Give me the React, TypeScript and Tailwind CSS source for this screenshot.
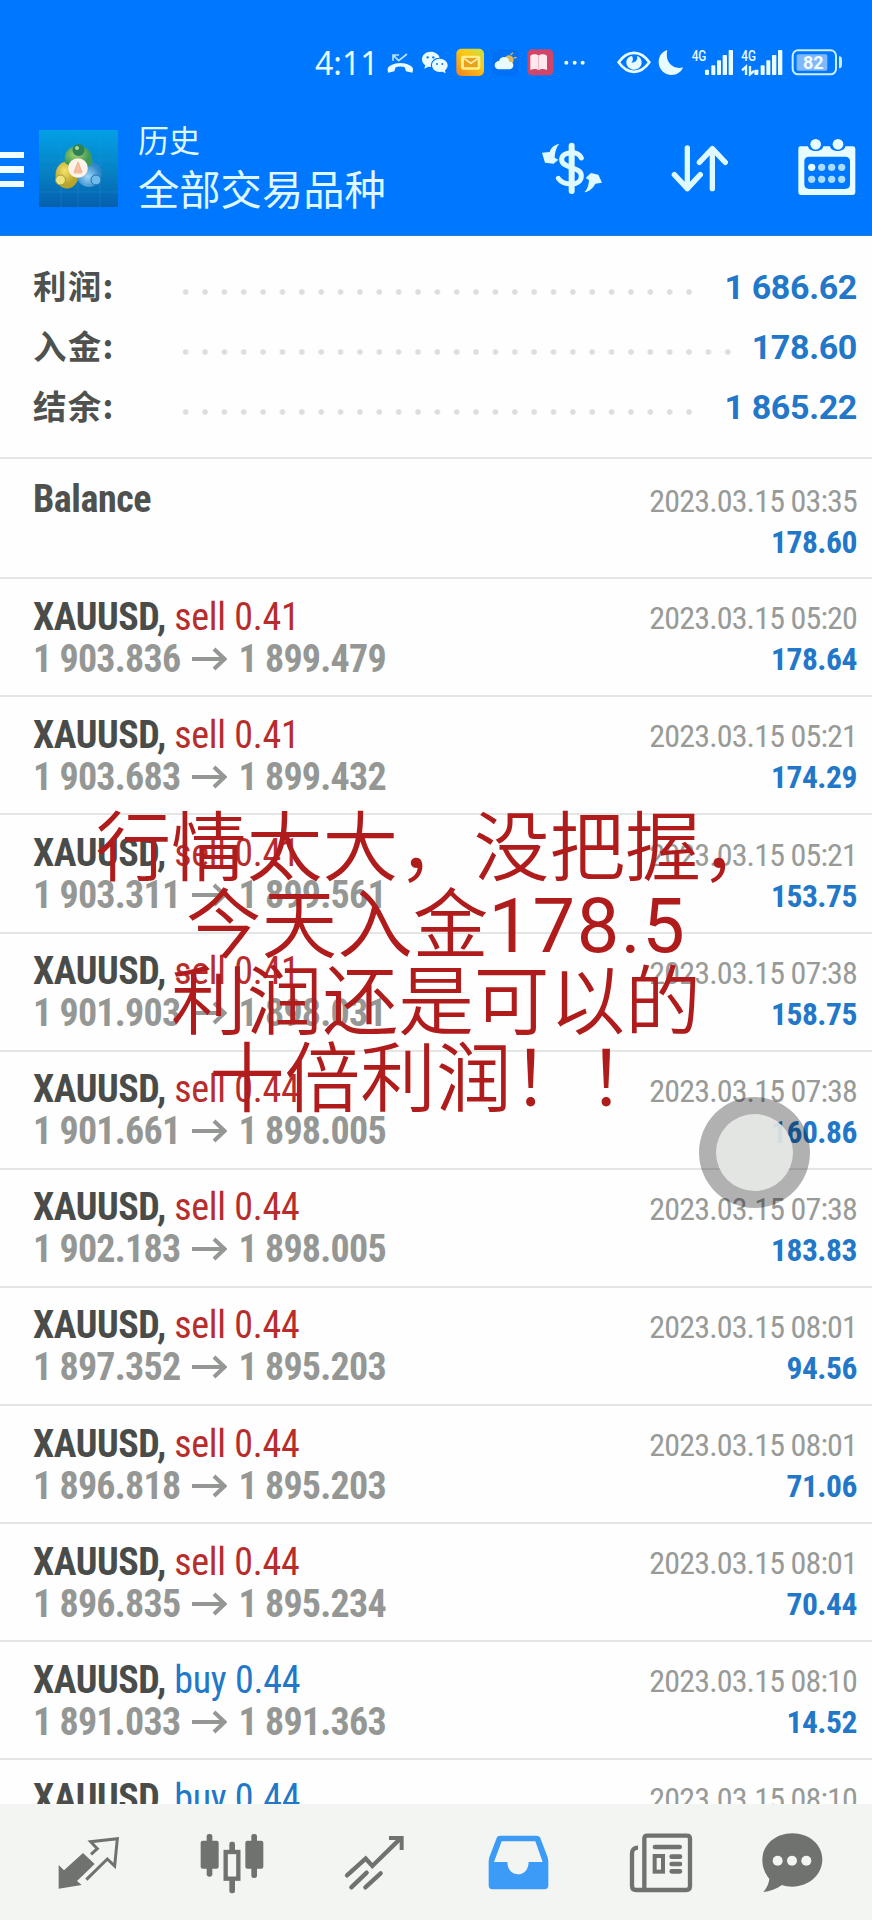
import React from "react";

const summary = [
	{ label: "利润:", value: "1 686.62", dots: "w-[523px]" },
	{ label: "入金:", value: "178.60", dots: "w-[562px]" },
	{ label: "结余:", value: "1 865.22", dots: "w-[523px]" },
];

const deals = [
	{ side: "sell", lot: "0.41", from: "1 903.836", to: "1 899.479", time: "2023.03.15 05:20", profit: "178.64" },
	{ side: "sell", lot: "0.41", from: "1 903.683", to: "1 899.432", time: "2023.03.15 05:21", profit: "174.29" },
	{ side: "sell", lot: "0.41", from: "1 903.311", to: "1 899.561", time: "2023.03.15 05:21", profit: "153.75" },
	{ side: "sell", lot: "0.41", from: "1 901.903", to: "1 898.031", time: "2023.03.15 07:38", profit: "158.75" },
	{ side: "sell", lot: "0.44", from: "1 901.661", to: "1 898.005", time: "2023.03.15 07:38", profit: "160.86" },
	{ side: "sell", lot: "0.44", from: "1 902.183", to: "1 898.005", time: "2023.03.15 07:38", profit: "183.83" },
	{ side: "sell", lot: "0.44", from: "1 897.352", to: "1 895.203", time: "2023.03.15 08:01", profit: "94.56" },
	{ side: "sell", lot: "0.44", from: "1 896.818", to: "1 895.203", time: "2023.03.15 08:01", profit: "71.06" },
	{ side: "sell", lot: "0.44", from: "1 896.835", to: "1 895.234", time: "2023.03.15 08:01", profit: "70.44" },
	{ side: "buy", lot: "0.44", from: "1 891.033", to: "1 891.363", time: "2023.03.15 08:10", profit: "14.52" },
];

const SignalBars = () => (
	<g fill="#e8fbff">
		<rect x="375" y="119" width="12" height="16" rx="2" />
		<rect x="394" y="106" width="12" height="29" rx="2" />
		<rect x="411" y="91" width="12" height="44" rx="2" />
		<rect x="428" y="75" width="13" height="60" rx="2" />
		<rect x="446" y="60" width="13" height="75" rx="2" />
	</g>
);

const StatusBar = () => (
	<div className="flex h-[100px] items-start pl-[315px] pt-[47px]">
		<span className="w-[71px] font-['Noto_Sans'] text-[32px] leading-[31px] text-[#e8fbff]">
			4:11
		</span>
		<svg viewBox="255 51 84 93" width="28" height="31">
			<path d="M262 128c-4-10-3-16 8-22 18-9 38-9 56 0 11 6 12 12 8 22l-19-4-4-12c-9-3-18-3-27 0l-4 12z" fill="#e8fbff" />
			<path d="M276 92V75h18M277 76l16 16 25-20" fill="none" stroke="#b9e2ff" strokeWidth="5" />
		</svg>
		<svg viewBox="360 51 84 93" width="28" height="31" className="ml-[7px]">
			<path d="M389 65c-15 0-26 10-26 23 0 8 4 14 10 18l-3 10 12-6 8 1c-2-18 10-28 26-28-3-11-14-18-27-18z" fill="#e8fbff" />
			<path d="M416 86c-13 0-23 9-23 20s10 20 23 20l8-1 10 5-2-9c5-4 8-9 8-15 0-11-11-20-24-20z" fill="#e8fbff" />
			<g fill="#0a7bff">
				<circle cx="380" cy="82" r="3.5" />
				<circle cx="397" cy="82" r="3.5" />
				<circle cx="408" cy="102" r="3" />
				<circle cx="424" cy="102" r="3" />
			</g>
		</svg>
		<svg viewBox="465 51 87 93" width="29" height="31" className="ml-[7px]">
			<defs>
				<linearGradient id="mail" x1="1" y1="0" x2="0.2" y2="1">
					<stop offset="0" stopColor="#c5e04a" />
					<stop offset="0.45" stopColor="#fbc815" />
					<stop offset="1" stopColor="#f58a1f" />
				</linearGradient>
			</defs>
			<rect x="466" y="56" width="83" height="82" rx="15" fill="url(#mail)" />
			<rect x="480" y="77" width="58" height="42" rx="7" fill="#fff08a" />
			<rect x="489" y="84" width="41" height="28" rx="2" fill="#e8a21c" />
			<path d="M490 86l20 14 20-14" fill="none" stroke="#fff3b8" strokeWidth="5" />
		</svg>
		<svg viewBox="573 51 81 93" width="27" height="31" className="ml-[7px]">
			<rect x="574" y="57" width="78" height="80" rx="14" fill="#0070f5" />
			<circle cx="624" cy="90" r="14" fill="#e0b95c" />
			<path d="M629 74l7-6M638 84l9-2" stroke="#e0b95c" strokeWidth="4" />
			<path d="M594 118c-9 0-13-6-13-12 0-8 6-13 13-13 2-8 8-12 15-12 9 0 15 6 16 14 8 0 12 5 12 11 0 8-6 12-12 12z" fill="#e8fbff" />
		</svg>
		<svg viewBox="678 51 87 93" width="29" height="31" className="ml-[7px]">
			<rect x="682" y="58" width="78" height="78" rx="14" fill="#d0466a" />
			<path d="M691 77c9-6 19-5 25 0 6-5 16-6 25 0v43c-9-4-19-4-25 1-6-5-16-5-25-1z" fill="#ffe9ee" />
			<path d="M716 77v43" stroke="#e6b4c2" strokeWidth="3" />
		</svg>
		<svg viewBox="789 51 72 93" width="24" height="31" className="ml-[8px]">
			<g fill="#e8fbff">
				<circle cx="799" cy="98" r="6" />
				<circle cx="824" cy="98" r="6" />
				<circle cx="848" cy="98" r="6" />
			</g>
		</svg>
		<svg viewBox="111 51 102 93" width="34" height="31" className="ml-[30px]">
			<path d="M116 97c26-38 66-38 92 0-26 38-66 38-92 0z" fill="none" stroke="#e8fbff" strokeWidth="8" />
			<path d="M156 78c-11 2-17 10-17 19 0 12 10 22 23 22s23-9 23-22c0-9-6-17-14-19 3 12-4 20-17 20 6-5 6-13 2-20z" fill="#e8fbff" />
		</svg>
		<svg viewBox="234 51 78 93" width="26" height="31" className="ml-[7px]">
			<path d="M262 60c-16 4-26 19-26 36 0 22 17 39 39 39 16 0 29-9 34-23-25 8-56-12-47-52z" fill="#e8fbff" />
		</svg>
		<svg viewBox="333 51 129 93" width="43" height="31" className="ml-[7px]">
			<SignalBars />
			<text x="335" y="94" fontSize="46" fontWeight="500" textLength="44" lengthAdjust="spacingAndGlyphs" fill="#e8fbff" fontFamily="Roboto, sans-serif">4G</text>
		</svg>
		<svg viewBox="333 51 129 93" width="43" height="31" className="ml-[7px]">
			<g transform="translate(-2 0)">
				<SignalBars />
				<text x="336" y="94" fontSize="46" fontWeight="500" textLength="44" lengthAdjust="spacingAndGlyphs" fill="#e8fbff" fontFamily="Roboto, sans-serif">4G</text>
				<path d="M350 135v-25l-12 11M362 108v25l12-10" fill="none" stroke="#e8fbff" strokeWidth="7" />
			</g>
		</svg>
		<svg viewBox="633 51 156 93" width="52" height="31" className="ml-[7px]">
			<rect x="638" y="61" width="130" height="72" rx="16" fill="none" stroke="#cdeeff" strokeWidth="6" />
			<rect x="650" y="73" width="92" height="49" rx="5" fill="#7fb9fb" />
			<path d="M777 79c9 0 9 6 9 18s0 18-9 18z" fill="#cdeeff" />
			<text x="700" y="116" fontSize="54" fontWeight="700" textAnchor="middle" fill="#f4fdff" fontFamily="Roboto, sans-serif">82</text>
		</svg>
	</div>
);

const AppLogo = () => (
	<svg viewBox="0 0 79 77" width="79" height="77" className="ml-[15px]">
		<defs>
			<linearGradient id="sky" x1="0" y1="0" x2="0" y2="1">
				<stop offset="0" stopColor="#03a0e6" />
				<stop offset="0.55" stopColor="#0681c4" />
				<stop offset="1" stopColor="#055fae" />
			</linearGradient>
			<radialGradient id="green" cx="0.4" cy="0.4">
				<stop offset="0" stopColor="#a5d272" />
				<stop offset="1" stopColor="#3f9a58" />
			</radialGradient>
			<radialGradient id="gold" cx="0.4" cy="0.35">
				<stop offset="0" stopColor="#f6e36a" />
				<stop offset="1" stopColor="#b7a42c" />
			</radialGradient>
			<radialGradient id="azure" cx="0.45" cy="0.6">
				<stop offset="0" stopColor="#9fd6f7" />
				<stop offset="1" stopColor="#2f88c8" />
			</radialGradient>
		</defs>
		<rect width="79" height="77" fill="url(#sky)" />
		<path d="M0 30h79M0 62h79M22 0v77M39 0v77M61 0v77" stroke="#2b9ad8" strokeWidth="0.6" opacity="0.5" />
		<ellipse cx="28" cy="45" rx="11.500" ry="13.500" fill="url(#gold)" />
		<ellipse cx="50" cy="44" rx="12.500" ry="13" fill="url(#azure)" />
		<path d="M26 33c-2-11 4-17 13-17s16 6 14 19c-5 3-22 3-27-2z" fill="url(#green)" />
		<circle cx="39.500" cy="20" r="6" fill="#2e8055" />
		<circle cx="38" cy="18" r="2" fill="#a5dd9a" />
		<circle cx="21.500" cy="50" r="5" fill="#eee47e" stroke="#a59a2a" />
		<circle cx="57" cy="50" r="5" fill="#6dbcec" stroke="#1f6fae" />
		<circle cx="39" cy="38" r="9.800" fill="#fdf3e8" />
		<path d="M39 32l-4 10h8zM35 43h8" fill="#f3bf9c" stroke="#f0b391" strokeWidth="1" />
	</svg>
);

const Header = () => (
	<header className="h-[236px] shrink-0 border-b border-[#2b7fd4] bg-[#0077ff]">
		<StatusBar />
		<div className="flex h-[135px] items-start">
			<div className="flex w-6 flex-col gap-2 pt-[52px]">
				<div className="h-[6.400px] bg-[#effdff]" />
				<div className="h-[6.400px] bg-[#effdff]" />
				<div className="h-[6.400px] bg-[#effdff]" />
			</div>
			<div className="pt-[30px]">
				<AppLogo />
			</div>
			<div className="ml-[20px] flex-1 pt-[17px] font-['Noto_Sans_CJK_SC'] text-[#dff8ff]">
				<div className="text-[31px] leading-[44px]">历史</div>
				<div className="text-[41.300px] leading-[52px]">全部交易品种</div>
			</div>
			<svg viewBox="60 90 192 168" width="64" height="56" className="mt-[40px]">
				<g fill="none" stroke="#dffaff" strokeWidth="15" strokeLinecap="round">
					<path d="M155 107v136" strokeWidth="18" />
					<path d="M184 144c-6-11-18-17-31-16-17 1-29 9-28 22 1 13 15 17 30 23 17 6 30 11 29 26-1 14-13 23-30 23-18 0-32-7-39-17" />
				</g>
				<path d="M118 102c-15 2-25 11-29 24l-23 2 9 30 26 3 14-12-11-6c1-15 4-31 14-41z" fill="#dffaff" />
				<path d="M193 247c15-2 27-14 33-26l20-3-11-24-22-5-16 15 10 6c-1 15-4 27-14 37z" fill="#dffaff" />
			</svg>
			<svg viewBox="450 102 180 144" width="60" height="48" className="ml-[66px] mt-[44px]">
				<path d="M502 114v122M463 194l39 42 39-42M577 236V116M538 157l39-41 39 41" fill="none" stroke="#dffaff" strokeWidth="16" strokeLinecap="round" strokeLinejoin="round" />
			</svg>
			<svg viewBox="831 84 180 174" width="60" height="58" className="ml-[67px] mr-[15px] mt-[38px]">
				<path fillRule="evenodd" d="M842 109h22c2 19 44 19 46 0h20c2 19 44 19 46 0h22c6 0 8 4 8 9v128c0 6-3 9-9 9H844c-6 0-9-3-9-9V118c0-5 2-9 7-9zM868 140c-10 0-15 5-15 14v69c0 9 5 14 15 14h107c10 0 15-5 15-14v-69c0-9-5-14-15-14z" fill="#e6fcff" />
				<circle cx="887" cy="103" r="16" fill="#e6fcff" />
				<circle cx="954" cy="103" r="16" fill="#e6fcff" />
				<g fill="#a9dcff">
					<circle cx="875" cy="172" r="11" fill="#e6fcff" />
					<circle cx="905" cy="172" r="11" />
					<circle cx="935" cy="172" r="11" />
					<circle cx="965" cy="172" r="11" />
					<circle cx="875" cy="208" r="11" />
					<circle cx="905" cy="208" r="11" />
					<circle cx="935" cy="208" r="11" />
					<circle cx="965" cy="208" r="11" />
				</g>
			</svg>
		</div>
	</header>
);

const Summary = () => (
	<section className="h-[221px] shrink-0 pl-[33px] pr-[15px] pt-[21px]">
		{summary.map(({ label, value, dots }) => (
			<div key={label} className="flex h-[60px] items-center">
				<span className="w-[143px] pb-[3px] font-['Noto_Sans_CJK_SC'] text-[33.500px] font-bold tracking-[1.200px] text-[#4f514f]">
					{label}
				</span>
				<span
					className={`mt-[10px] h-[8px] bg-[radial-gradient(circle_at_center,#dcdedc_2.300px,transparent_3.300px)] bg-[length:19.370px_8px] ${dots}`}
				/>
				<span className="ml-auto font-['Roboto'] text-[34px] font-bold tracking-[-0.350px] text-[#2277c8]">
					{value}
				</span>
			</div>
		))}
	</section>
);

const Arrow = () => (
	<svg viewBox="0 0 35 24" width="35" height="24" className="mx-[11.500px] inline-block align-[1px]">
		<path d="M0 12h33M22 2l10.500 10L22 22" fill="none" stroke="#959795" strokeWidth="4" />
	</svg>
);

const Row = ({
	title,
	prices,
	time,
	profit,
	className,
}: {
	title: React.ReactNode;
	prices?: React.ReactNode;
	time: string;
	profit: string;
	className: string;
}) => (
	<div
		className={`flex shrink-0 justify-between border-t-2 border-[#e4e6e4] pl-[33px] pr-[15px] font-['Roboto_Condensed','Roboto'] [font-stretch:75%] ${className}`}
	>
		<div className="whitespace-nowrap text-[38px] leading-[42px]">
			<div className="tracking-[-0.450px]">{title}</div>
			<div className="font-bold tracking-[-0.750px] text-[#959795]">{prices}</div>
		</div>
		<div className="whitespace-nowrap pt-[2.500px] text-right leading-[41px]">
			<div className="text-[32px] tracking-[-0.850px] text-[#989a98]">{time}</div>
			<div className="text-[31.500px] font-bold tracking-[-0.450px] text-[#2277c8]">{profit}</div>
		</div>
	</div>
);

const TabBar = () => (
	<nav className="flex h-[116px] shrink-0 items-start bg-[#f3f5f3] pl-[17px] pt-[26px]">
		<div className="flex w-[143px] justify-center">
			<svg viewBox="174 240 192 192" width="64" height="64">
				<path d="M179 345l16 16 57-52 35 33-53 51 14 12-69 11z" fill="#70726f" />
				<path d="M262 389l63-62 22 21 8-82-80 9 20 21-19 17" fill="none" stroke="#70726f" strokeWidth="9" />
			</svg>
		</div>
		<div className="flex w-[143px] justify-center">
			<svg viewBox="600 240 192 192" width="64" height="64">
				<g fill="#70726f">
					<rect x="602" y="272" width="54" height="84" rx="6" />
					<rect x="620" y="252" width="17" height="128" rx="7" />
					<rect x="736" y="272" width="54" height="84" rx="6" />
					<rect x="754" y="252" width="17" height="132" rx="7" />
					<rect x="688" y="275" width="17" height="30" rx="7" />
					<rect x="688" y="386" width="17" height="44" rx="7" />
				</g>
				<rect x="677" y="306" width="38" height="80" fill="none" stroke="#70726f" strokeWidth="13" />
			</svg>
		</div>
		<div className="flex w-[143px] justify-center">
			<svg viewBox="1030 240 192 192" width="64" height="64">
				<path d="M1042 376l56-50 20 22 84-82M1055 412l46-44M1097 412l46-42" fill="none" stroke="#70726f" strokeWidth="13" strokeLinecap="round" />
				<path d="M1168 264h38v36" fill="none" stroke="#70726f" strokeWidth="12" />
			</svg>
		</div>
		<div className="flex w-[143px] justify-center">
			<svg viewBox="150 240 192 192" width="64" height="64">
				<path fillRule="evenodd" d="M193 257h108c6 0 10 2 12 7l22 58 2 12v72c0 8-4 12-12 12H170c-8 0-12-4-12-12v-72l2-12 22-58c2-5 5-7 11-7zM197 274l-23 62h40c1 24 14 37 32 37s31-13 32-37h42l-22-62z" fill="#3d9bf8" />
			</svg>
		</div>
		<div className="flex w-[143px] justify-center">
			<svg viewBox="581 240 192 192" width="64" height="64">
				<g fill="none" stroke="#70726f">
					<path d="M627 420V266c0-6 3-9 9-9h118c6 0 10 3 10 9v142c0 8-4 12-11 12H603c-9 0-13-5-13-13V310c0-11 7-17 18-17" strokeWidth="13" />
					<rect x="658" y="318" width="25" height="47" strokeWidth="12" />
					<path d="M659 291h74M709 320h25M709 342h25M709 364h25" strokeWidth="14" strokeLinecap="round" />
				</g>
			</svg>
		</div>
		<div className="flex w-[119px] justify-center">
			<svg viewBox="972 240 192 192" width="64" height="64">
				<path d="M1069 250c50 0 90 34 90 78 0 46-40 82-90 82-12 0-22-2-31-5-17 12-37 20-56 21 10-12 17-26 18-40-13-15-21-35-21-56 0-46 40-80 90-80z" fill="#70726f" />
				<g fill="#f3f5f3">
					<circle cx="1025" cy="332" r="15" />
					<circle cx="1068" cy="332" r="15" />
					<circle cx="1111" cy="332" r="15" />
				</g>
			</svg>
		</div>
	</nav>
);

export default function App() {
	return (
		<div className="relative flex h-[1920px] w-[872px] flex-col overflow-hidden bg-[#fdfefd]">
			<Header />
			<Summary />
			<main className="flex min-h-0 flex-1 flex-col overflow-hidden">
				<Row
					className="h-[120.300px] pt-[19px]"
					title={<span className="font-bold text-[#4f514f]">Balance</span>}
					time="2023.03.15 03:35"
					profit="178.60"
				/>
				{deals.map((deal, i) => (
					<Row
						key={i}
						className="h-[118.100px] pt-[16.600px]"
						title={
							<>
								<span className="font-bold text-[#4a4c4a]">XAUUSD, </span>
								<span
									className={`tracking-[-0.250px] ${deal.side === "sell" ? "text-[#b82c2c]" : "text-[#2277c8]"}`}
								>
									{deal.side} {deal.lot}
								</span>
							</>
						}
						prices={
							<>
								{deal.from}
								<Arrow />
								{deal.to}
							</>
						}
						time={deal.time}
						profit={deal.profit}
					/>
				))}
				<Row
					className="h-[118.100px] pt-[16.600px]"
					title={
						<>
							<span className="font-bold text-[#4a4c4a]">XAUUSD, </span>
							<span className="tracking-[-0.250px] text-[#2277c8]">buy 0.44</span>
						</>
					}
					time="2023.03.15 08:10"
					profit=""
				/>
			</main>
			<TabBar />

			<div className="absolute left-[699px] top-[1097px] flex size-[111px] items-center justify-center rounded-full bg-black/30">
				<div className="size-[77px] rounded-full bg-[#e9ebe9]/90" />
			</div>

			<div className="absolute inset-x-0 top-[811px] whitespace-nowrap text-center font-['Roboto','Noto_Sans_CJK_SC'] text-[75.700px] font-[350] leading-[77px] text-[#b01b1b]">
				<div>行情太大，没把握，</div>
				<div>
					今天入金<span className="font-normal tracking-[1.500px]">178.5</span>
				</div>
				<div>利润还是可以的</div>
				<div>十倍利润！！</div>
			</div>
		</div>
	);
}
